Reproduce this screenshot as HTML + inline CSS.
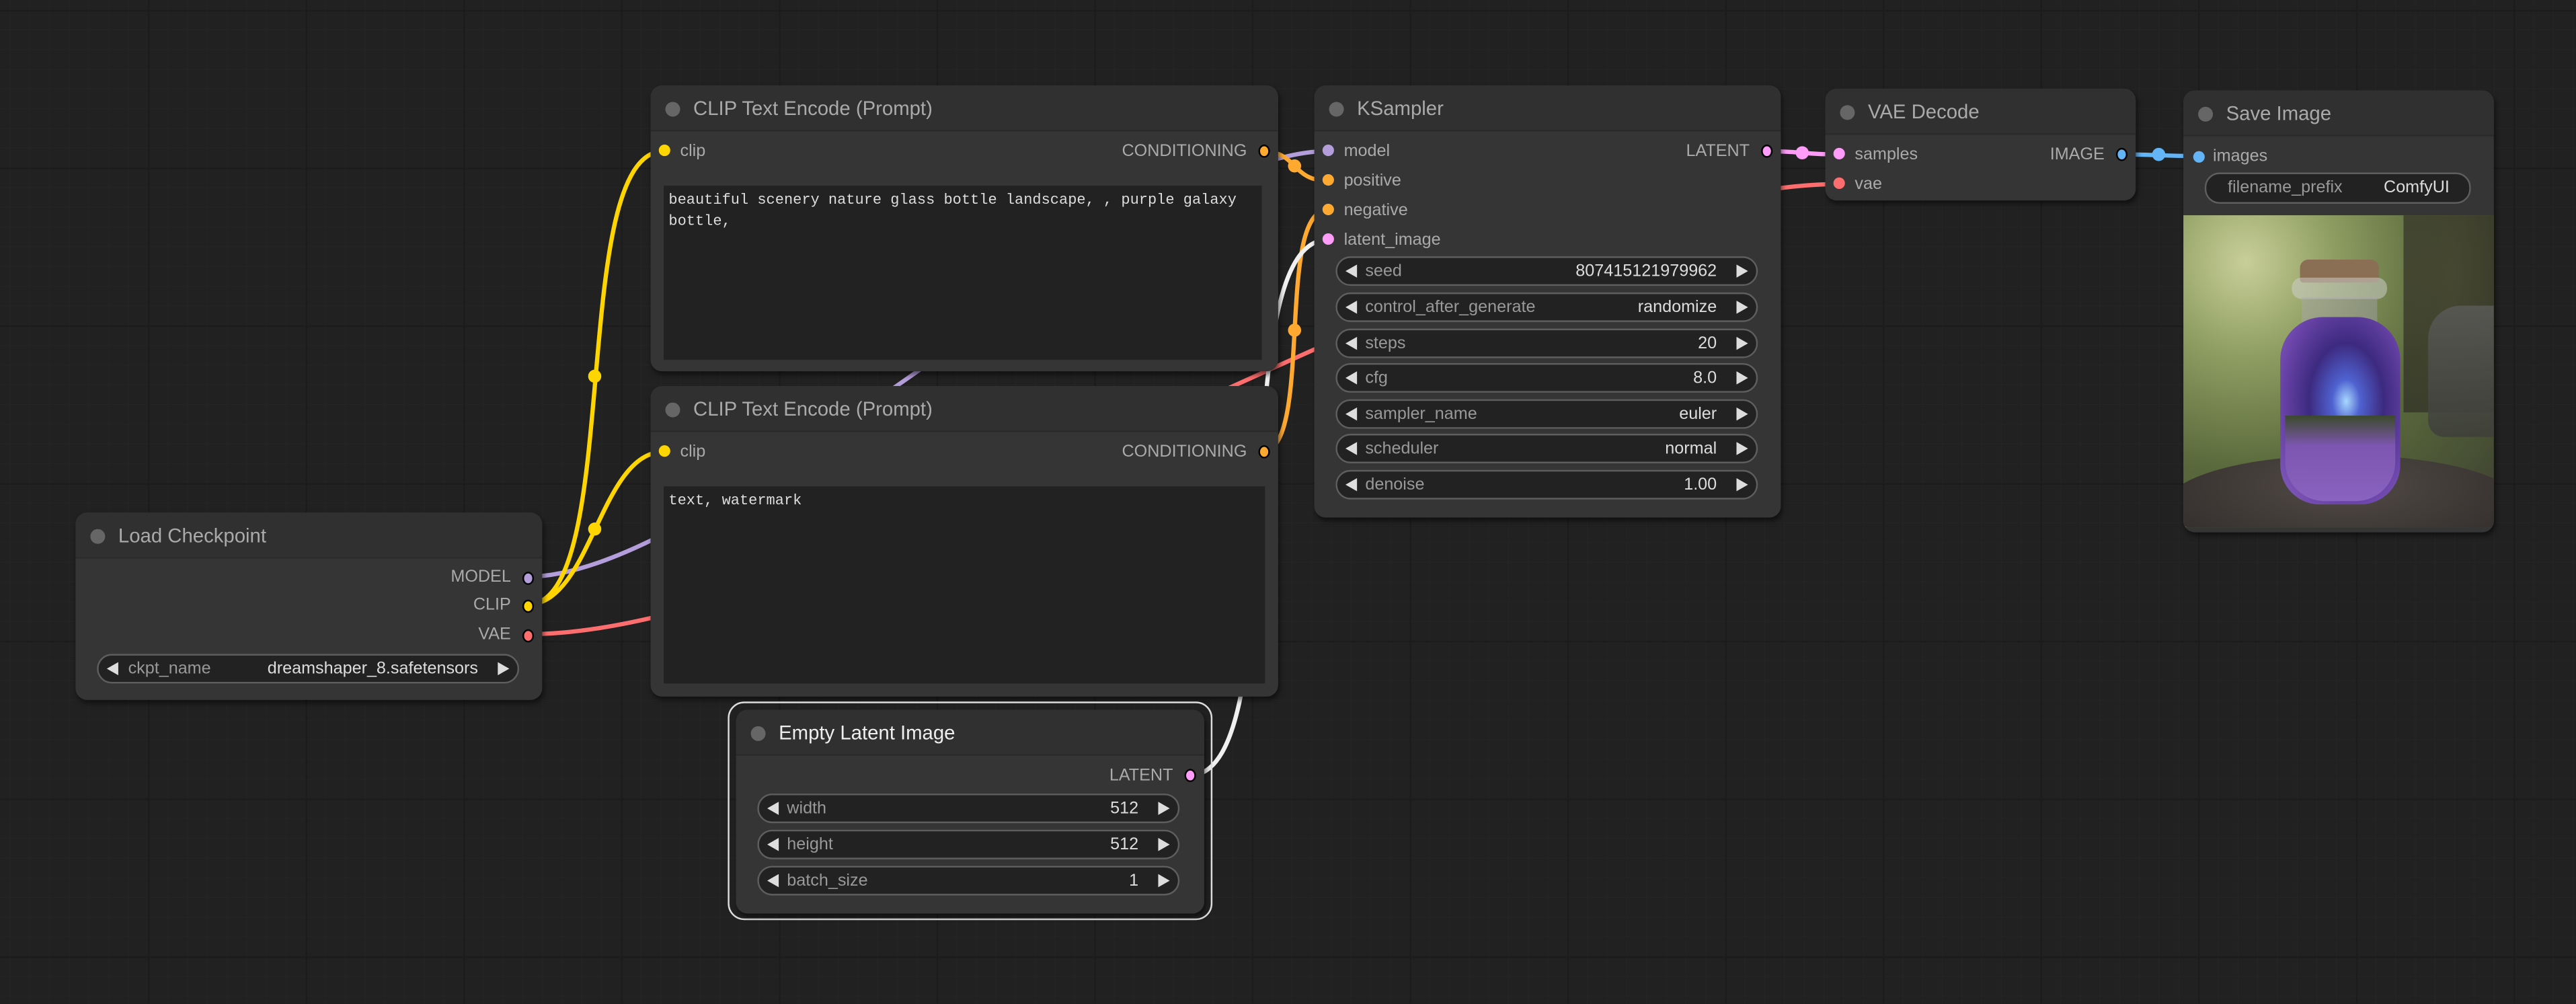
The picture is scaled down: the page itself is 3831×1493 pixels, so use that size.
<!DOCTYPE html>
<html><head><meta charset="utf-8"><style>
html,body{margin:0;padding:0;background:#202020;width:3831px;height:1491px;overflow:hidden}
#c{position:absolute;left:0;top:0;width:1568px;height:611px;transform:scale(2.44324);transform-origin:0 0;
background-color:#212121;
background-image:linear-gradient(#1c1c1c 1px,transparent 1px),linear-gradient(90deg,#1c1c1c 1px,transparent 1px),linear-gradient(#252525 0.5px,transparent 0.5px),linear-gradient(90deg,#252525 0.5px,transparent 0.5px);
background-size:96px 96px,96px 96px,12px 12px,12px 12px;background-position:-6px 6px;
font-family:"Liberation Sans",Arial,sans-serif}
.n{position:absolute;background:#353535;border-radius:7px;box-shadow:1px 2px 3px rgba(0,0,0,.5)}
.t{height:27px;background:#303030;border-radius:7px 7px 0 0;border-bottom:1px solid #2a2a2a;color:#aaa;font-size:12px;line-height:29px;padding-left:26px;position:relative}
.t:before{content:"";position:absolute;left:9px;top:10px;width:9px;height:9px;border-radius:50%;background:#666}
.s{position:absolute;font-size:10.3px;color:#aaa;line-height:12px}
.d{position:absolute;width:7px;height:7px;border-radius:50%}
.w{position:absolute;height:16px;border:1px solid #5e5e5e;border-radius:9px;background:#222;font-size:10.3px;line-height:16px;color:#999}
.w .l{position:absolute;left:17px;top:1px}
.w .v{position:absolute;right:24px;top:1px;color:#ddd}
.w:before{content:"";position:absolute;left:5px;top:3.5px;border-right:7px solid #ddd;border-top:4.5px solid transparent;border-bottom:4.5px solid transparent}
.w:after{content:"";position:absolute;right:5px;top:3.5px;border-left:7px solid #ddd;border-top:4.5px solid transparent;border-bottom:4.5px solid transparent}
.w.nt:before,.w.nt:after{display:none}
.ta{position:absolute;background:#222;font-family:"Liberation Mono","DejaVu Sans Mono",monospace;font-size:9px;color:#ddd;line-height:13px;padding:3px 3px;box-sizing:border-box;white-space:pre-wrap}
svg{position:absolute;left:0;top:0}
</style></head><body><div id="c">
<svg width="1568" height="611" fill="none" stroke-width="2.6" stroke-linecap="round">
<path d="M321,351 C440,351 690,92 808,92" stroke="#b39ddb"/>
<path d="M321,368 C380,368 345,92 404,92" stroke="#ffd500"/>
<path d="M321,368 C360,368 365,275 404,275" stroke="#ffd500"/>
<path d="M321,386 C520,386 920,112 1119,112" stroke="#ff6e6e"/>
<path d="M768,92 C790,92 786,110 808,110" stroke="#ffa931"/>
<path d="M768,275 C800,275 776,128 808,128" stroke="#ffa931"/>
<path d="M724,472 C790,472 742,146 808,146" stroke="#f0f0f0"/>
<path d="M1075,92 C1097,92 1097,94 1119,94" stroke="#ff9cf9"/>
<path d="M1291,94 C1314,94 1314,95 1338,95" stroke="#64b5f6"/>
<g stroke="none"><circle cx="362" cy="229" r="4" fill="#ffd500"/><circle cx="362" cy="322" r="4" fill="#ffd500"/>
<circle cx="788" cy="101" r="4" fill="#ffa931"/><circle cx="788" cy="201" r="4" fill="#ffa931"/>
<circle cx="1097" cy="93" r="4" fill="#ff9cf9"/><circle cx="1314" cy="94" r="4" fill="#64b5f6"/></g>
</svg>

<!-- Load Checkpoint -->
<div class="n" style="left:46px;top:312px;width:284px;height:114px"><div class="t">Load Checkpoint</div>
<div class="s" style="right:19px;top:34px">MODEL</div><div class="d" style="right:5px;top:36px;background:#b39ddb;border:1px solid #000;width:5px;height:6px"></div>
<div class="s" style="right:19px;top:51px">CLIP</div><div class="d" style="right:5px;top:53px;background:#ffd500;border:1px solid #000;width:5px;height:6px"></div>
<div class="s" style="right:19px;top:69px">VAE</div><div class="d" style="right:5px;top:71px;background:#ff6e6e;border:1px solid #000;width:5px;height:6px"></div>
<div class="w" style="left:13px;top:86px;width:255px"><span class="l" style="left:18px">ckpt_name</span><span class="v">dreamshaper_8.safetensors</span></div>
</div>

<!-- CLIP 1 -->
<div class="n" style="left:396px;top:52px;width:382px;height:174px"><div class="t">CLIP Text Encode (Prompt)</div>
<div class="d" style="left:5px;top:36px;background:#ffd500"></div><div class="s" style="left:18px;top:35px">clip</div>
<div class="s" style="right:19px;top:35px">CONDITIONING</div><div class="d" style="right:5px;top:36px;background:#ffa931;border:1px solid #000;width:5px;height:6px"></div>
<div class="ta" style="left:8px;top:61px;width:364px;height:106px">beautiful scenery nature glass bottle landscape, , purple galaxy bottle,</div>
</div>

<!-- CLIP 2 -->
<div class="n" style="left:396px;top:235px;width:382px;height:189px"><div class="t">CLIP Text Encode (Prompt)</div>
<div class="d" style="left:5px;top:36px;background:#ffd500"></div><div class="s" style="left:18px;top:35px">clip</div>
<div class="s" style="right:19px;top:35px">CONDITIONING</div><div class="d" style="right:5px;top:36px;background:#ffa931;border:1px solid #000;width:5px;height:6px"></div>
<div class="ta" style="left:8px;top:61px;width:366px;height:120px">text, watermark</div>
</div>

<!-- Empty Latent -->
<div style="position:absolute;left:443px;top:427px;width:293px;height:131px;border:1.3px solid #ddd;border-radius:10px"></div>
<div class="n" style="left:448px;top:432px;width:285px;height:124px"><div class="t" style="color:#eee">Empty Latent Image</div>
<div class="s" style="right:19px;top:35px">LATENT</div><div class="d" style="right:5px;top:36px;background:#ff9cf9;border:1px solid #000;width:5px;height:6px"></div>
<div class="w" style="left:13px;top:51px;width:255px"><span class="l">width</span><span class="v">512</span></div>
<div class="w" style="left:13px;top:73px;width:255px"><span class="l">height</span><span class="v">512</span></div>
<div class="w" style="left:13px;top:95px;width:255px"><span class="l">batch_size</span><span class="v">1</span></div>
</div>

<!-- KSampler -->
<div class="n" style="left:800px;top:52px;width:284px;height:263px"><div class="t">KSampler</div>
<div class="d" style="left:5px;top:36px;background:#b39ddb"></div><div class="s" style="left:18px;top:35px">model</div>
<div class="d" style="left:5px;top:54px;background:#ffa931"></div><div class="s" style="left:18px;top:53px">positive</div>
<div class="d" style="left:5px;top:72px;background:#ffa931"></div><div class="s" style="left:18px;top:71px">negative</div>
<div class="d" style="left:5px;top:90px;background:#ff9cf9"></div><div class="s" style="left:18px;top:89px">latent_image</div>
<div class="s" style="right:19px;top:35px">LATENT</div><div class="d" style="right:5px;top:36px;background:#ff9cf9;border:1px solid #000;width:5px;height:6px"></div>
<div class="w" style="left:13px;top:104px;width:255px"><span class="l">seed</span><span class="v">807415121979962</span></div>
<div class="w" style="left:13px;top:126px;width:255px"><span class="l">control_after_generate</span><span class="v">randomize</span></div>
<div class="w" style="left:13px;top:148px;width:255px"><span class="l">steps</span><span class="v">20</span></div>
<div class="w" style="left:13px;top:169px;width:255px"><span class="l">cfg</span><span class="v">8.0</span></div>
<div class="w" style="left:13px;top:191px;width:255px"><span class="l">sampler_name</span><span class="v">euler</span></div>
<div class="w" style="left:13px;top:212px;width:255px"><span class="l">scheduler</span><span class="v">normal</span></div>
<div class="w" style="left:13px;top:234px;width:255px"><span class="l">denoise</span><span class="v">1.00</span></div>
</div>

<!-- VAE Decode -->
<div class="n" style="left:1111px;top:54px;width:189px;height:68px"><div class="t">VAE Decode</div>
<div class="d" style="left:5px;top:36px;background:#ff9cf9"></div><div class="s" style="left:18px;top:35px">samples</div>
<div class="d" style="left:5px;top:54px;background:#ff6e6e"></div><div class="s" style="left:18px;top:53px">vae</div>
<div class="s" style="right:19px;top:35px">IMAGE</div><div class="d" style="right:5px;top:36px;background:#64b5f6;border:1px solid #000;width:5px;height:6px"></div>
</div>

<!-- Save Image -->
<div class="n" style="left:1329px;top:55px;width:189px;height:269px;overflow:hidden"><div class="t">Save Image</div>
<div class="d" style="left:6px;top:37px;background:#64b5f6"></div><div class="s" style="left:18px;top:35px">images</div>
<div class="w nt" style="left:13px;top:50px;width:160px;height:17px;background:#222"><span class="l" style="left:13px;color:#999">filename_prefix</span><span class="v" style="right:12px">ComfyUI</span></div>
<div style="position:absolute;left:0;top:76px;width:189px;height:190px;overflow:hidden;background:radial-gradient(ellipse at 20% 15%,#c8cf98 0%,#8f9e62 25%,#5a6a3c 55%,#3c3f30 100%)">
<div style="position:absolute;right:-5px;top:0;width:60px;height:120px;background:radial-gradient(ellipse at 50% 30%,#3e3a2c,#2d2c24);opacity:.7"></div>
<div style="position:absolute;right:0;top:55px;width:40px;height:80px;background:linear-gradient(#5a5a58,#3e3f3a);border-radius:20px 0 0 10px;opacity:.85"></div>
<div style="position:absolute;left:-10px;top:146px;width:215px;height:60px;border-radius:50%;background:radial-gradient(ellipse at 50% 30%,#524b47,#2c2826)"></div>
<div style="position:absolute;left:71px;top:27px;width:48px;height:14px;background:#8a6f55;border-radius:5px 5px 2px 2px"></div>
<div style="position:absolute;left:66px;top:38px;width:58px;height:13px;background:rgba(210,210,210,.5);border-radius:6px"></div>
<div style="position:absolute;left:72px;top:50px;width:46px;height:18px;background:rgba(170,165,185,.4)"></div>
<div style="position:absolute;left:59px;top:62px;width:73px;height:114px;border-radius:26px 26px 24px 24px;background:radial-gradient(ellipse at 55% 45%,#a8d8ff 0%,#4f62d0 15%,#3d2a80 40%,#6a44a8 70%,#8a62c0 100%)"></div>
<div style="position:absolute;left:62px;top:122px;width:67px;height:52px;border-radius:0 0 24px 24px;background:linear-gradient(#3b4a2a 0%,#7c56b0 35%,#8a62c0 100%)"></div>
</div>
</div>
</div></body></html>
